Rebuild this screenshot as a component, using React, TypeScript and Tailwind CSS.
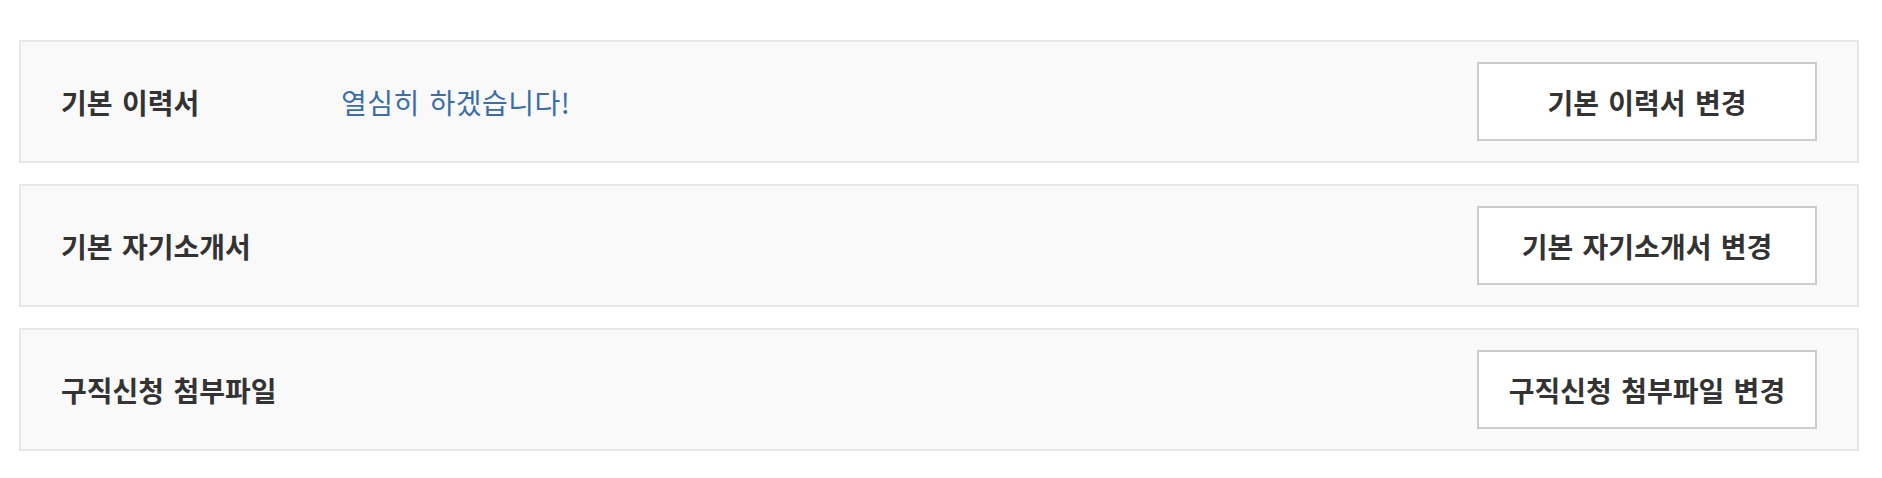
import React from 'react';

interface RowProps {
  title: string;
  memo?: string;
  action: string;
}

function SettingRow({ title, memo, action }: RowProps) {
  return (
    <div className="flex h-[123px] items-center border-2 border-[#e6e6e6] bg-[#f9f9f9] pl-[40px] pr-[40px]">
      <div className="w-[280px] shrink-0 text-[28px] font-bold text-[#333333] [word-spacing:3px]">{title}</div>
      {memo && <div className="text-[28px] tracking-[0.5px] text-[#3b6ea8] [word-spacing:3px]">{memo}</div>}
      <button
        type="button"
        className="ml-auto flex h-[79px] w-[340px] items-center justify-center border-2 border-[#cccccc] bg-white text-[28px] font-bold text-[#333333] [word-spacing:3px]"
      >
        {action}
      </button>
    </div>
  );
}

export default function App() {
  return (
    <div
      className="min-h-screen bg-white pl-[19px] pr-[23px] pt-[40px]"
      style={{ fontFamily: '"Noto Sans CJK KR", "Noto Sans", sans-serif' }}
    >
      <div className="flex flex-col gap-[21px]">
        <SettingRow title="기본 이력서" memo="열심히 하겠습니다!" action="기본 이력서 변경" />
        <SettingRow title="기본 자기소개서" action="기본 자기소개서 변경" />
        <SettingRow title="구직신청 첨부파일" action="구직신청 첨부파일 변경" />
      </div>
    </div>
  );
}
